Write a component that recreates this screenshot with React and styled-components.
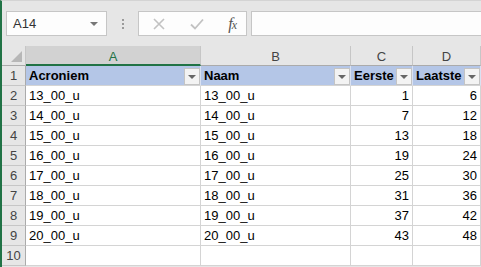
import React from "react";
import styled, { createGlobalStyle } from "styled-components";

const GlobalStyle = createGlobalStyle`
  html, body {
    margin: 0;
    padding: 0;
    background: #e6e6e6;
  }
  * {
    box-sizing: border-box;
  }
`;

const Sheet = styled.div`
  width: 481px;
  height: 267px;
  overflow: hidden;
  background: #e6e6e6;
  border-left: 2px solid #217346;
  border-top: 1px solid #d4d4d4;
  font-family: "Liberation Sans", Arial, sans-serif;
  display: flex;
  flex-direction: column;
`;

const FormulaBar = styled.div`
  display: flex;
  align-items: center;
  height: 25px;
  margin: 10px 0 10px 4px;
`;

const Field = styled.div`
  height: 25px;
  background: #fdfdfd;
  border: 1px solid #c6c6c6;
  display: flex;
  align-items: center;
`;

const NameBox = styled(Field)`
  width: 101px;
  padding: 0 6px 0 6px;
  justify-content: space-between;
  font-size: 13px;
  color: #333;
`;

const Caret = styled.span`
  width: 0;
  height: 0;
  border-left: 4px solid transparent;
  border-right: 4px solid transparent;
  border-top: 4px solid #777;
  margin-right: 2px;
`;

const Grip = styled.div`
  width: 31px;
  display: flex;
  flex-direction: column;
  align-items: center;
  gap: 2px;
  span {
    width: 2px;
    height: 2px;
    background: #9a9a9a;
  }
`;

const Buttons = styled(Field)`
  width: 109px;
  justify-content: space-between;
  padding: 0 10px 0 13px;
`;

const Fx = styled.span`
  font-family: "Liberation Serif", "Times New Roman", serif;
  font-style: italic;
  font-size: 16px;
  color: #555;
  letter-spacing: -1px;
  sub {
    font-size: 12px;
    vertical-align: baseline;
    position: relative;
    top: 0;
  }
`;

const Formula = styled(Field)`
  flex: 1;
  margin-left: 4px;
  border-right: none;
`;

const Grid = styled.div`
  display: grid;
  grid-template-columns: 24px 175px 150px 62px 68px;
  grid-auto-rows: 20px;
`;

const Corner = styled.div`
  position: relative;
  background: #e6e6e6;
  border-right: 1px solid #c6c6c6;
  border-bottom: 1px solid #ababab;
  &::after {
    content: "";
    position: absolute;
    right: 3px;
    bottom: 3px;
    width: 0;
    height: 0;
    border-left: 11px solid transparent;
    border-bottom: 11px solid #b7b7b7;
  }
`;

const ColHead = styled.div`
  display: flex;
  align-items: center;
  justify-content: center;
  font-size: 13px;
  padding-top: 2px;
  background: ${(p) => (p.$active ? "#d2d2d2" : "#e6e6e6")};
  color: ${(p) => (p.$active ? "#217346" : "#444")};
  border-right: 1px solid #c6c6c6;
  border-bottom: ${(p) => (p.$active ? "2px solid #217346" : "1px solid #ababab")};
`;

const RowHead = styled.div`
  display: flex;
  align-items: flex-end;
  justify-content: center;
  padding-bottom: 2px;
  font-size: 13px;
  color: #444;
  background: #e6e6e6;
  border-right: 1px solid #ababab;
  border-bottom: 1px solid #c6c6c6;
`;

const Cell = styled.div`
  position: relative;
  display: flex;
  align-items: flex-end;
  justify-content: ${(p) => (p.$num ? "flex-end" : "flex-start")};
  padding: 0 ${(p) => (p.$num ? "3px" : "2px")} 2px 3px;
  font-size: 13px;
  color: #000;
  white-space: nowrap;
  background: ${(p) => (p.$header ? "#b4c6e7" : "#fff")};
  font-weight: ${(p) => (p.$header ? "bold" : "normal")};
  border-right: 1px solid ${(p) => (p.$header ? "#d9e1f2" : "#d4d4d4")};
  border-bottom: 1px solid #d4d4d4;
`;

const Filter = styled.span`
  position: absolute;
  right: 0;
  top: 2px;
  width: 16px;
  height: 17px;
  background: #f3f3f3;
  border: 1px solid #c4c4c4;
  display: flex;
  align-items: center;
  justify-content: center;
  &::after {
    content: "";
    width: 0;
    height: 0;
    border-left: 4px solid transparent;
    border-right: 4px solid transparent;
    border-top: 4px solid #666;
  }
`;

const columns = ["A", "B", "C", "D"];
const headers = ["Acroniem", "Naam", "Eerste", "Laatste"];
const rows = [
  ["13_00_u", 1, 6],
  ["14_00_u", 7, 12],
  ["15_00_u", 13, 18],
  ["16_00_u", 19, 24],
  ["17_00_u", 25, 30],
  ["18_00_u", 31, 36],
  ["19_00_u", 37, 42],
  ["20_00_u", 43, 48],
];

export default function App() {
  return (
    <>
      <GlobalStyle />
      <Sheet>
        <FormulaBar>
          <NameBox>
            A14
            <Caret />
          </NameBox>
          <Grip>
            <span />
            <span />
            <span />
          </Grip>
          <Buttons>
            <svg width="14" height="14" viewBox="0 0 14 14">
              <path d="M2 2 L12 12 M12 2 L2 12" stroke="#c2c2c2" strokeWidth="1.6" fill="none" />
            </svg>
            <svg width="16" height="14" viewBox="0 0 16 14">
              <path d="M2 7.5 L6 11.5 L14 2.5" stroke="#c2c2c2" strokeWidth="1.8" fill="none" />
            </svg>
            <Fx>
              f<sub>x</sub>
            </Fx>
          </Buttons>
          <Formula />
        </FormulaBar>
        <Grid>
          <Corner />
          {columns.map((c, i) => (
            <ColHead key={c} $active={i === 0}>
              {c}
            </ColHead>
          ))}
          <RowHead>1</RowHead>
          {headers.map((h) => (
            <Cell key={h} $header>
              {h}
              <Filter />
            </Cell>
          ))}
          {rows.map((r, i) => (
            <React.Fragment key={r[0]}>
              <RowHead>{i + 2}</RowHead>
              <Cell>{r[0]}</Cell>
              <Cell>{r[0]}</Cell>
              <Cell $num>{r[1]}</Cell>
              <Cell $num>{r[2]}</Cell>
            </React.Fragment>
          ))}
          <RowHead>10</RowHead>
          <Cell />
          <Cell />
          <Cell />
          <Cell />
        </Grid>
      </Sheet>
    </>
  );
}
